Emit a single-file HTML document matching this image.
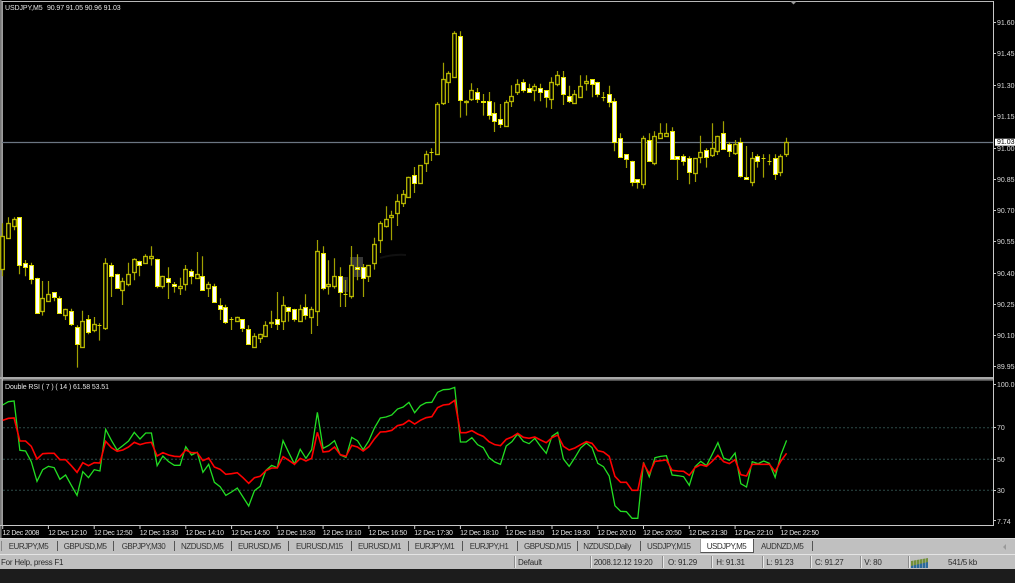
<!DOCTYPE html>
<html><head><meta charset="utf-8"><style>
html,body{margin:0;padding:0;background:#1c1c1c}
#w{position:relative;width:1015px;height:583px;overflow:hidden;background:#1c1c1c;font-family:"Liberation Sans",sans-serif;filter:blur(.25px)}
#w div,#w span{position:absolute}
.t{font-size:7px;line-height:10px;color:#e4e4e4;white-space:pre;letter-spacing:-.28px}
.h{letter-spacing:-.1px}
.a{font-size:7px;line-height:10px;color:#d8d8d8;white-space:pre;left:997px}
.tab{font-size:8px;line-height:10px;color:#333;white-space:pre;top:542px;letter-spacing:-.48px}
.st{font-size:8px;line-height:10px;color:#2a2a2a;white-space:pre;top:558px;letter-spacing:-.22px}
.sep{background:#555;width:1px;top:541px;height:10px}
.ss{background:#8c8c8c;border-right:1px solid #e8e8e8;width:1px;top:556px;height:12px}
</style></head><body><div id="w">
<div style="left:0;top:0;width:1015px;height:538px;background:#000"></div>
<svg id="s" width="1015" height="583" style="position:absolute;left:0;top:0">
<rect x="0" y="1" width="993" height="1" fill="#b8b8b8"/>
<rect x="0" y="0" width="1.6" height="538" fill="#777"/>
<rect x="1.6" y="1" width="1.2" height="525" fill="#c4c4c4"/>
<rect x="993" y="1" width="1" height="525" fill="#c8c8c8"/>
<rect x="0" y="377" width="993" height="2" fill="#a8a8a8"/>
<rect x="2" y="379.4" width="991" height="1" fill="#c8c8c8"/>
<rect x="0" y="525" width="994" height="1" fill="#c8c8c8"/>
<path d="M790 1h7l-3.500 3.500z" fill="#9a9a9a"/>
<rect x="350" y="257" width="13" height="20" fill="#4a4a4a" opacity=".75"/>
<rect x="342" y="277" width="6" height="15" fill="#3a3a3a" opacity=".8"/>
<path d="M380 258q14-4 26-3" stroke="#101010" fill="none" stroke-width="2"/>
<line x1="2" y1="142.500" x2="993" y2="142.500" stroke="#6b7682" stroke-width="1.300"/>
<path d="M3 427.700H993M3 459.300H993M3 490.300H993" stroke="#2c4a48" stroke-width="1" stroke-dasharray="2 2"/>
<g id="c"></g><g id="r"></g>
<path d="M993 22.500h3M993 53.500h3M993 85.500h3M993 116.500h3M993 148.500h3M993 179.500h3M993 210.500h3M993 241.500h3M993 273.500h3M993 304.500h3M993 335.500h3M993 366.500h3M993 384.500h3M993 427.500h3M993 459.500h3M993 490.500h3M993 520.500h3" stroke="#c8c8c8"/>
<path id="tk" stroke="#d0d0d0" fill="none"/>
<rect x="995" y="138.700" width="20" height="7" fill="#fff"/>
</svg>
<span class="t h" style="left:5px;top:4px">USDJPY,M5</span><span class="t h" style="left:47px;top:4px">90.97 91.05 90.96 91.03</span>
<span class="t h" style="left:5px;top:383px">Double RSI ( 7 ) ( 14 ) 61.58 53.51</span>
<span class="a" style="top:19px">91.60</span><span class="a" style="top:50px">91.45</span><span class="a" style="top:82px">91.30</span><span class="a" style="top:113px">91.15</span><span class="a" style="top:145px">91.00</span><span class="a" style="top:176px">90.85</span><span class="a" style="top:207px">90.70</span><span class="a" style="top:238px">90.55</span><span class="a" style="top:270px">90.40</span><span class="a" style="top:301px">90.25</span><span class="a" style="top:332px">90.10</span><span class="a" style="top:363px">89.95</span>
<span class="a" style="top:138px;color:#000">91.03</span>
<span class="a" style="top:381px">100.01</span><span class="a" style="top:424px">70</span><span class="a" style="top:456px">50</span><span class="a" style="top:487px">30</span><span class="a" style="top:518px">7.74</span>
<span class="t" style="left:2.500px;top:529px">12 Dec 2008</span><span class="t" style="left:48.300px;top:529px">12 Dec 12:10</span><span class="t" style="left:94px;top:529px">12 Dec 12:50</span><span class="t" style="left:139.800px;top:529px">12 Dec 13:30</span><span class="t" style="left:185.500px;top:529px">12 Dec 14:10</span><span class="t" style="left:231.300px;top:529px">12 Dec 14:50</span><span class="t" style="left:277px;top:529px">12 Dec 15:30</span><span class="t" style="left:322.800px;top:529px">12 Dec 16:10</span><span class="t" style="left:368.600px;top:529px">12 Dec 16:50</span><span class="t" style="left:414.300px;top:529px">12 Dec 17:30</span><span class="t" style="left:460.100px;top:529px">12 Dec 18:10</span><span class="t" style="left:505.800px;top:529px">12 Dec 18:50</span><span class="t" style="left:551.600px;top:529px">12 Dec 19:30</span><span class="t" style="left:597.400px;top:529px">12 Dec 20:10</span><span class="t" style="left:643.100px;top:529px">12 Dec 20:50</span><span class="t" style="left:688.900px;top:529px">12 Dec 21:30</span><span class="t" style="left:734.600px;top:529px">12 Dec 22:10</span><span class="t" style="left:780.400px;top:529px">12 Dec 22:50</span>
<div style="left:0;top:538px;width:1015px;height:16px;background:#c0c0c0;border-top:1px solid #d8d8d8;box-sizing:border-box"></div>
<div style="left:0;top:554px;width:1015px;height:1px;background:#e4e4e4"></div>
<div style="left:0;top:555px;width:1015px;height:14px;background:#c0c0c0"></div>
<div style="left:1px;top:541px;width:1px;height:10px;background:#888"></div>
<span class="tab" style="left:8.700px">EURJPY,M5</span><div class="sep" style="left:56.500px"></div>
<span class="tab" style="left:63.700px">GBPUSD,M5</span><div class="sep" style="left:113px"></div>
<span class="tab" style="left:121.700px">GBPJPY,M30</span><div class="sep" style="left:173.500px"></div>
<span class="tab" style="left:181px">NZDUSD,M5</span><div class="sep" style="left:230.500px"></div>
<span class="tab" style="left:238px">EURUSD,M5</span><div class="sep" style="left:288px"></div>
<span class="tab" style="left:296px">EURUSD,M15</span><div class="sep" style="left:351px"></div>
<span class="tab" style="left:358px">EURUSD,M1</span><div class="sep" style="left:408px"></div>
<span class="tab" style="left:414.700px">EURJPY,M1</span><div class="sep" style="left:462px"></div>
<span class="tab" style="left:469.700px">EURJPY,H1</span><div class="sep" style="left:516.700px"></div>
<span class="tab" style="left:524px">GBPUSD,M15</span><div class="sep" style="left:577px"></div>
<span class="tab" style="left:583.300px">NZDUSD,Daily</span><div class="sep" style="left:639.700px"></div>
<span class="tab" style="left:647px">USDJPY,M15</span>
<div style="left:700px;top:539px;width:54px;height:14px;background:#fff;border-right:1px solid #555;border-bottom:1px solid #555;border-left:1px solid #999;box-sizing:border-box"></div>
<span class="tab" style="left:706.700px">USDJPY,M5</span>
<span class="tab" style="left:761px">AUDNZD,M5</span><div class="sep" style="left:811.500px"></div>
<svg width="8" height="8" style="position:absolute;left:1001px;top:543px"><path d="M5 1v6L2 4z" fill="#9a9a9a"/></svg>
<span class="st" style="left:1px">For Help, press F1</span>
<div class="ss" style="left:514px"></div><span class="st" style="left:518px">Default</span>
<div class="ss" style="left:590px"></div><span class="st" style="left:593.700px">2008.12.12 19:20</span>
<div class="ss" style="left:662px"></div><span class="st" style="left:668px">O: 91.29</span>
<div class="ss" style="left:711px"></div><span class="st" style="left:716.300px">H: 91.31</span>
<div class="ss" style="left:762px"></div><span class="st" style="left:766.300px">L: 91.23</span>
<div class="ss" style="left:810px"></div><span class="st" style="left:815px">C: 91.27</span>
<div class="ss" style="left:860px"></div><span class="st" style="left:864.300px">V: 80</span>
<div class="ss" style="left:908px"></div>
<svg width="18" height="10" style="position:absolute;left:911px;top:558px"><path d="M0 10V3L17 0V10z" fill="#72903a"/><path d="M0 10V8L17 4V10z" fill="#2a6a9c"/><path d="M2.500 0v10M5.500 0v10M8.500 0v10M11.500 0v10M14.500 0v10" stroke="#c0c0c0" stroke-width=".5"/></svg>
<span class="st" style="left:948px">541/5 kb</span>
</div>
<script>
var A=[[100,258,137,238,0],[82,146,100,144,0],[82,120,88,107,0],[82,252,82,225,1],[210,258,218,232,1],[218,282,225,268,1],[263,369,263,369,1],[273,376,325,363,0],[273,335,313,332,0],[306,333,306,320,1],[319,369,325,369,1],[356,389,356,376,0],[356,407,362,401,1],[406,532,412,463,1],[362,470,394,470,0],[375,432,388,425,1],[381,426,401,419,0],[400,451,405,405,2],[205,419,218,413,0],[218,320,225,257,1],[251,294,251,294,1],[263,344,274,301,0],[218,288,251,281,0],[205,270,206,245,0],[212,258,212,225,1],[193,220,199,219,0],[169,226,199,205,0],[206,294,206,288,1],[257,295,257,288,0],[232,326,264,275,1],[276,307,281,288,1],[263,314,287,294,0],[225,301,238,281,0],[238,282,244,257,1],[186,264,251,264,0],[199,300,257,300,1],[275,320,281,294,0],[281,338,287,337,1],[325,389,344,356,1],[344,401,350,395,1],[381,419,386,386,2],[380,395,382,394,0],[388,425,388,413,1],[406,463,418,463,1],[430,470,437,470,0],[431,458,431,444,0],[394,438,406,438,0],[362,413,395,400,0],[306,419,388,401,1],[319,419,344,394,0],[350,394,350,362,1],[356,394,356,388,1],[344,395,356,394,0],[313,388,350,375,1],[350,431,356,382,0],[150,407,182,362,0],[169,300,188,294,1],[211,313,281,287,0],[205,295,257,288,0]];
var B=[[232,350,257,307,1],[270,350,313,313,2],[168,325,225,319,0],[193,270,232,238,1],[222,320,232,263,1],[225,275,225,257,0],[143,238,163,218,0],[94,188,100,150,0],[49,112,88,107,0],[62,150,75,82,0],[13,107,32,69,0],[0,50,13,38,0]];
var C=[[470,530,470,530,0],[441,518,466,490,1],[435,490,435,490,0],[392,455,403,429,0],[385,422,396,396,2],[247,404,253,403,0],[128,254,178,248,0],[154,248,160,185,0],[34,172,40,172,0],[34,292,47,241,1],[241,286,242,247,0],[190,242,210,236,0],[204,248,217,236,1],[222,286,242,247,1],[216,298,242,285,1],[247,335,279,304,1],[252,323,298,311,1],[241,317,247,317,0],[196,260,229,242,0],[178,224,191,217,0],[178,217,185,210,1],[191,217,204,217,1],[191,243,197,211,0],[191,243,204,217,1],[210,262,210,230,1],[172,266,185,236,0],[153,198,166,191,0],[153,254,172,223,1],[197,248,229,242,1],[210,248,223,248,0],[166,231,197,230,0],[166,211,184,190,0],[178,231,178,191,1],[185,231,185,223,1],[216,243,230,230,2],[197,261,223,247,1]];
var D=[[25,183,32,156,1],[130,200,143,200,1],[193,233,193,206,1],[212,288,212,275,1],[268,295,268,275,1],[137,295,143,281,0],[130,213,150,213,1],[124,225,137,219,0],[100,145,130,144,0],[100,138,130,137,0],[112,206,124,206,1],[199,269,199,206,1],[193,226,199,212,1],[199,282,205,245,1],[205,275,205,250,0],[137,219,187,200,0],[175,232,181,200,1],[100,200,175,194,0],[137,194,137,182,0],[94,176,130,176,1],[156,200,162,182,1],[150,194,162,188,0],[143,262,156,258,1],[168,268,262,268,1],[186,288,205,275,0],[193,232,199,212,1],[193,262,205,205,2],[193,225,212,212,2],[193,269,205,251,1],[193,258,199,245,0],[143,200,156,193,0]];
function conv(a,o){return a.map(function(c){return [o+c[0]/3,o+c[1]/3,o+c[2]/3,o+c[3]/3,c[4]]})}
var all=conv(A,190).concat(conv(B,190),conv(C,20),conv(D,90));
var wick='',holl='',fill='',cross='';
function X(i){return 2.67+5.722*i}
function sn(v){return Math.round(v)+.5}
all.forEach(function(c,i){var left=Math.floor(X(i)-2)+.5,x=left+2,t=sn(c[2]),b=sn(c[3]),h=Math.max(b-t,0);
wick+='M'+x+' '+c[0].toFixed(1)+'V'+(c[1]+.3).toFixed(1);
if(c[4]==2){cross+='M'+left+' '+t+'h4'}
else if(c[4]==0){holl+='<rect x="'+(left+.2)+'" y="'+t+'" width="3.6" height="'+h+'"/>'}
else{fill+='<rect x="'+left+'" y="'+t+'" width="4" height="'+h+'"/>'}});
document.getElementById('c').innerHTML='<path d="'+wick+'" stroke="#a0a000" stroke-width="1.2" fill="none"/><path d="'+cross+'" stroke="#d8d800" fill="none"/><g fill="#000" stroke="#b8b800" stroke-width="1.3">'+holl+'</g><g fill="#fff" stroke="#e6e600" stroke-width="1">'+fill+'</g>';
var G6=[90,80,78,226,228,260,319,284,274,278,313,300,331,361,290,308,284,288,163,196,225,212,198,172,192,174,174,272,243,260,271,271,215,240,232,292,268,322,335,361,351,339,366,393,347,334,286,271,278,197,233,267,223,250,224,112,220,211,197,240,247];
var R6=[136,130,129,198,198,214,252,236,235,235,254,254,272,292,263,272,263,264,199,218,229,225,216,202,209,204,202,243,233,240,244,245,225,233,233,257,249,276,283,298,296,293,308,325,308,304,287,279,279,245,256,268,250,258,250,172,231,229,216,239,244];
var G7=[187,197,224,197,158,129,126,120,102,96,82,113,92,83,82,52,44,43,37,201,201,188,209,218,248,261,268,213,200,177,199,206,190,214,235,184,172,252,274,248,219,204,218,265,275,303,392,409,410,430,430,262,305,248,244,242,300,302];
var R7=[211,216,228,215,191,171,170,166,152,148,136,147,136,128,125,98,90,88,76,173,173,167,177,184,200,209,212,193,186,175,187,190,186,195,203,188,180,214,225,219,209,200,205,227,231,244,304,322,322,346,346,266,296,259,257,255,286,288];
var G8=[305,331,275,259,272,238,203,249,256,234,326,336,260,266,258,265,307,240,196];
var R8=[289,301,278,269,274,259,241,260,266,254,299,303,268,268,268,268,290,258,235];
function pts(a){return a.map(function(v,i){return X(i).toFixed(2)+','+(375+v/3).toFixed(2)}).join(' ')}
document.getElementById('r').innerHTML='<polyline fill="none" stroke="#22dd22" stroke-width="1.3" points="'+pts(G6.concat(G7,G8))+'"/><polyline fill="none" stroke="#ff0000" stroke-width="1.6" points="'+pts(R6.concat(R7,R8))+'"/>';
var tk='';for(var i=0;i<18;i++){tk+='M'+(X(i*8)).toFixed(1)+' 526v3'}
document.getElementById('tk').setAttribute('d',tk);
</script>
</body></html>
